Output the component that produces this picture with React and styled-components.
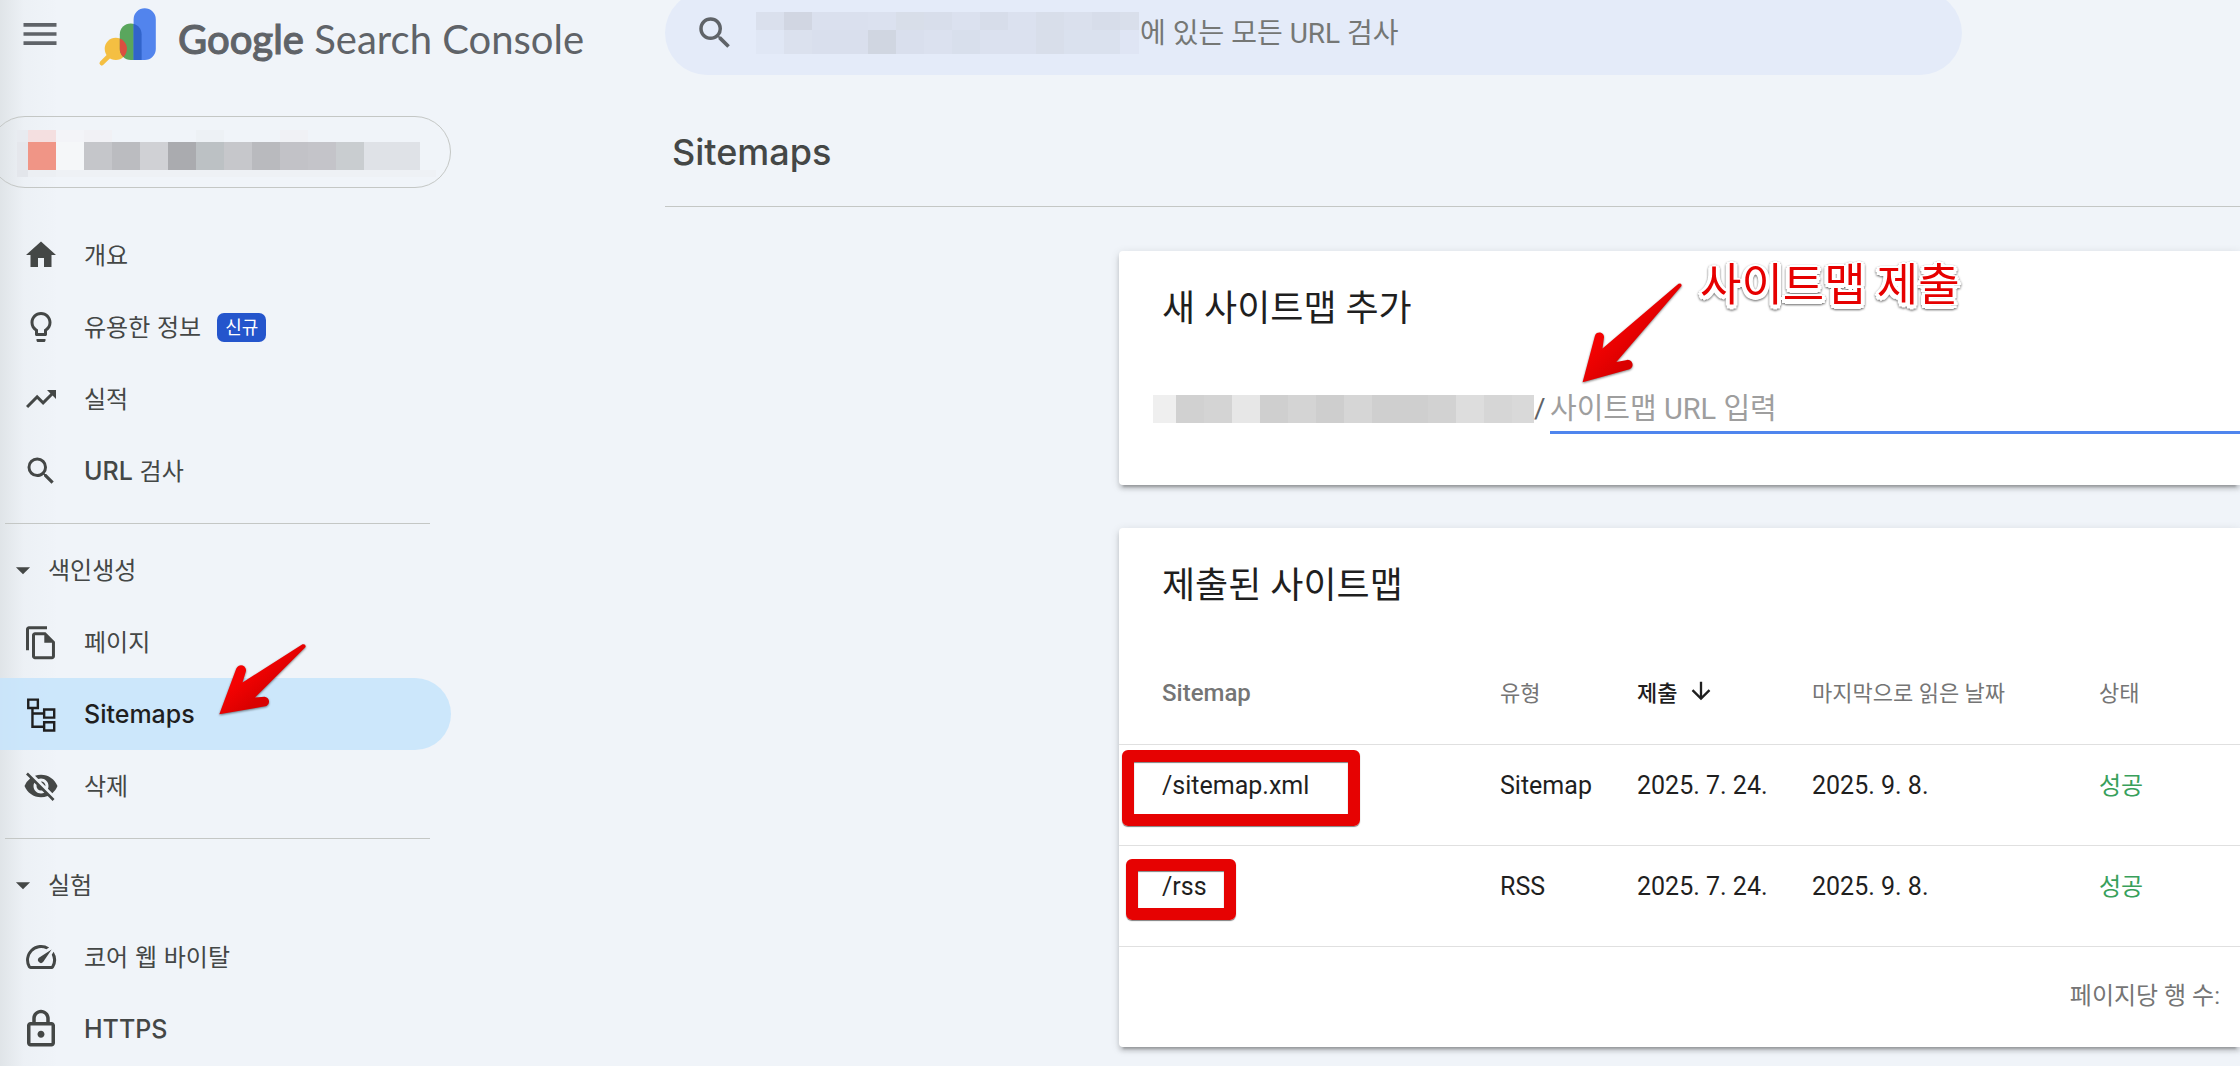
// Librairies.
import React from 'react';
import styled, { createGlobalStyle } from 'styled-components';
import {
    MdArrowDownward,
    MdArrowDropDown,
    MdHome,
    MdLightbulbOutline,
    MdMenu,
    MdOutlineLock,
    MdSearch,
    MdSpeed,
    MdTrendingUp,
    MdVisibilityOff,
} from 'react-icons/md';


// Global.
const GlobalStyle = createGlobalStyle`
    * {
        box-sizing: border-box;
    }

    body {
        margin     : 0;
        background : #f0f4f9;
        color      : #1f1f1f;
        font-family: Roboto, 'Noto Sans CJK KR', sans-serif;
        overflow   : hidden;
    }
`;


// Styled Components.
const StyledPage = styled.div`
    display              : grid;
    grid-template-columns: 665px minmax(0, 1fr);
    min-height           : 100vh;
    background           : linear-gradient(to right, rgba(60, 70, 60, .09), rgba(60, 70, 60, .02) 24px, transparent 60px);
`;

const StyledBrand = styled.div`
    display    : flex;
    align-items: center;
    height     : 74px;
    padding    : 0 0 6px 18px;
`;

const StyledMenuButton = styled.button`
    display   : flex;
    padding   : 0;
    border    : 0;
    background: none;
    color     : #5f6368;
    font-size : 44px;
`;

const StyledLogo = styled.svg`
    width : 60px;
    height: 60px;
    margin: 6px 20px 0 36px;
`;

const StyledBrandName = styled.span`
    padding-top: 10px;
    color      : #5f6368;
    font-family: Lato, 'Noto Sans CJK KR', sans-serif;
    font-size  : 40px;
    line-height: 52px;
    white-space: nowrap;

    b {
        font-weight        : 500;
        -webkit-text-stroke: 1px #5f6368;
    }
`;

const StyledProperty = styled.button`
    display      : flex;
    align-items  : center;
    width        : 462px;
    height       : 72px;
    margin       : 42px 0 31px -11px;
    padding      : 3px 0 0 27px;
    border       : 1px solid #c4c7c5;
    border-radius: 36px;
    background   : none;
`;

const StyledMosaic = styled.span`
    display       : flex;
    flex-direction: column;
    flex-shrink   : 0;
`;

const StyledMosaicLine = styled.span`
    display: flex;
    height : ${props => props.$height}px;
`;

const StyledTile = styled.span`
    width     : ${props => props.$width}px;
    background: ${props => props.$color};
`;

const StyledNav = styled.nav`
    display       : flex;
    flex-direction: column;
    width         : 451px;
    font-family   : Inter, 'Noto Sans CJK KR', sans-serif;
    font-size     : 24px;
`;

const StyledNavLink = styled.a`
    position       : relative;
    display        : flex;
    align-items    : center;
    height         : 72px;
    padding-left   : 20px;
    border-radius  : 0 36px 36px 0;
    background     : ${props => props.$active ? 'rgba(197, 228, 252, .85)' : 'none'};
    color          : ${props => props.$active ? '#1f1f1f' : '#444746'};
    text-decoration: none;
`;

const StyledNavIcon = styled.span`
    display        : flex;
    justify-content: center;
    width          : 42px;
    margin-right   : 22px;
    font-size      : ${props => props.$size || 36}px;
`;

const StyledNavLabel = styled.span`
    padding-bottom: 3px;
`;

const StyledLatin = styled.span`
    font-size  : 25px;
    font-weight: 500;
`;

const StyledBadge = styled.span`
    margin-left  : 16px;
    padding      : 0 8px;
    border-radius: 7px;
    background   : #2455cc;
    color        : white;
    font-size    : 18px;
    line-height  : 29px;
`;

const StyledSection = styled.button`
    display    : flex;
    align-items: center;
    gap        : 8px;
    height     : 72px;
    padding    : 0 0 0 6px;
    border     : 0;
    background : none;
    color      : #444746;
    font-family: inherit;
    font-size  : 24px;

    svg {
        font-size: 34px;
    }
`;

const StyledDivider = styled.hr`
    width     : 425px;
    height    : 1px;
    margin    : 16px 0 10px 5px;
    border    : 0;
    background: #c4c7c5;
`;

const StyledSearch = styled.label`
    display      : flex;
    align-items  : center;
    height       : 84px;
    margin       : -9px 278px 0 0;
    padding      : 0 40px 0 29px;
    border-radius: 42px;
    background   : #e4ebf9;
    color        : #5f6368;

    > svg {
        flex-shrink : 0;
        margin-right: 20px;
        font-size   : 42px;
    }
`;

const StyledSearchInput = styled.input`
    flex       : 1;
    min-width  : 0;
    padding    : 0 1px;
    border     : 0;
    outline    : 0;
    background : none;
    font-family: inherit;
    font-size  : 28px;

    &::placeholder {
        color: #757775;
    }
`;

const StyledTitle = styled.h1`
    margin       : 0;
    padding      : 47px 0 23px 7px;
    border-bottom: 1px solid #c4c7c5;
    color        : #444746;
    font-family  : Inter, sans-serif;
    font-size    : 36px;
    font-weight  : 500;
    line-height  : 61px;
`;

const StyledCards = styled.div`
    display       : flex;
    flex-direction: column;
    gap           : 43px;
    padding       : 44px 0 19px 454px;
`;

const StyledCard = styled.section`
    position     : relative;
    border-radius: 4px 0 0 4px;
    background   : white;
    box-shadow   : 0 6px 2px -4px rgba(0, 0, 0, .2),
                   0 4px 4px 0 rgba(0, 0, 0, .14),
                   0 2px 10px 0 rgba(0, 0, 0, .12);
`;

const StyledCardTitle = styled.h2`
    margin     : 0;
    padding    : 31px 43px 25px;
    font-size  : 36px;
    font-weight: 400;
    line-height: 54px;
`;

const StyledForm = styled.form`
    display    : flex;
    align-items: center;
    padding    : 22px 0 51px 34px;
    color      : #5f6368;
    font-size  : 28px;
`;

const StyledSlash = styled.span`
    width: 16px;
`;

const StyledUrlInput = styled.input`
    flex         : 1;
    min-width    : 0;
    height       : 51px;
    padding      : 3px 0 0;
    border       : 0;
    border-bottom: 3px solid #4f85ee;
    outline      : 0;
    background   : none;
    font-family  : inherit;
    font-size    : 29px;

    &::placeholder {
        color: #9e9e9e;
    }
`;

const StyledTable = styled.table`
    width          : 100%;
    border-collapse: separate;
    border-spacing : 0;
    table-layout   : fixed;
    text-align     : left;
`;

const StyledTh = styled.th`
    width         : ${props => props.$width ? props.$width + 'px' : 'auto'};
    height        : 107px;
    padding       : ${props => props.$first ? '3px 0 0 43px' : 0};
    border-bottom : 1px solid #e0e0e0;
    color         : #757575;
    font-size     : ${props => props.$first ? 24 : 22}px;
    font-weight   : ${props => props.$first ? 500 : 400};
    vertical-align: middle;
`;

const StyledSort = styled.button`
    display    : flex;
    align-items: center;
    gap        : 10px;
    padding    : 0;
    border     : 0;
    background : none;
    color      : #1f1f1f;
    font-family: inherit;
    font-size  : 22px;
    font-weight: 500;

    svg {
        font-size: 28px;
    }
`;

const StyledTd = styled.td`
    position      : relative;
    height        : 101px;
    padding       : 22px 0 0 ${props => props.$first ? 43 : 0}px;
    border-bottom : 1px solid #e0e0e0;
    color         : ${props => props.$success ? '#38a05b' : '#1f1f1f'};
    font-size     : ${props => props.$success ? 24 : 25}px;
    line-height   : 38px;
    vertical-align: top;
`;

const StyledPager = styled.div`
    padding    : 31px 20px 32px 0;
    color      : #757575;
    font-size  : 24px;
    line-height: 37px;
    text-align : right;
`;

// Annotations posées par-dessus la page.
const StyledFrame = styled.span`
    position     : absolute;
    top          : ${props => props.$top}px;
    left         : ${props => props.$left}px;
    width        : ${props => props.$width}px;
    height       : ${props => props.$height}px;
    border       : 12px solid #e60202;
    border-radius: 6px;
    box-shadow   : 0 1px 1px rgba(0, 0, 0, .5), inset 0 1px 1px rgba(0, 0, 0, .5);
`;

const StyledArrow = styled.svg`
    position: absolute;
    top     : ${props => props.$top}px;
    left    : ${props => props.$left}px;
    z-index : 1;
    filter  : drop-shadow(0 1px 1px rgba(0, 0, 0, .5));
`;

const StyledNote = styled.strong`
    position   : absolute;
    top        : 2px;
    left       : 581px;
    color      : #e60000;
    font-size  : 45px;
    font-weight: 400;
    line-height: 66px;
    white-space: nowrap;
    text-shadow: -4px 1px white, 4px 1px white, 0 -2px white, 0 5px white,
                 -3px 4px white, 3px 4px white, -3px -1px white, 3px -1px white;
    filter     : drop-shadow(0 1px 1px rgba(0, 0, 0, .6));
`;


// Tuiles des zones masquées : [largeur, couleur].
const propertyMosaic = [
    { height: 12, tiles: [[11, '#e8ebf0'], [28, '#f4dfe0'], [28, '#f3f4f8'], [28, '#f1f1f5'], [84, '#f0f4f9'], [28, '#edf1f5'], [56, '#f0f4f9'], [28, '#f0f1f5'], [128, '#f0f4f9']] },
    { height: 28, tiles: [[11, '#e5e7ec'], [28, '#f09586'], [28, '#f5f7f9'], [28, '#c5c6ca'], [28, '#bbbcc0'], [28, '#d0d1d5'], [28, '#aaabaf'], [28, '#bcc1c4'], [28, '#c6c7cb'], [28, '#b9babe'], [28, '#c2c2c7'], [28, '#c4c4c9'], [28, '#c9cdd0'], [56, '#dfe2e7']] },
    { height: 7, tiles: [[11, '#e3e6eb'], [28, '#eceff3'], [380, '#eef1f5']] },
];

const searchMosaic = [
    { height: 18, tiles: [[28, '#dae0ed'], [28, '#d1d6e2'], [56, '#dae0ee'], [28, '#dbe1ef'], [28, '#d8dee9'], [28, '#d8deeb'], [28, '#dbe1ef'], [28, '#d7ddea'], [28, '#dbe1ef'], [28, '#d8deea'], [28, '#dae0ed'], [28, '#d7ddea'], [19, '#d9dfeb']] },
    { height: 24, tiles: [[28, '#e0e7f5'], [28, '#dbe1ee'], [56, '#d9dfed'], [28, '#d0d6e1'], [28, '#d9dfed'], [28, '#dbe1ef'], [28, '#d8dfec'], [56, '#dbe1ef'], [28, '#d8deea'], [56, '#dae1ee'], [19, '#dfe5f4']] },
];

const urlMosaic = [
    { height: 28, tiles: [[23, '#efefef'], [28, '#d1d1d1'], [28, '#d4d4d4'], [28, '#e7e7e7'], [28, '#cfcfcf'], [28, '#d4d4d4'], [28, '#cecece'], [28, '#d6d6d6'], [56, '#cfcfcf'], [28, '#d2d2d2'], [28, '#dddddd'], [28, '#d6d6d6'], [22, '#d9d9d9']] },
];

const sitemaps = [
    { path: '/sitemap.xml', type: 'Sitemap', sent: '2025. 7. 24.', read: '2025. 9. 8.', status: '성공', frame: { $top: 5, $left: 3, $width: 238, $height: 76 } },
    { path: '/rss', type: 'RSS', sent: '2025. 7. 24.', read: '2025. 9. 8.', status: '성공', frame: { $top: 13, $left: 7, $width: 110, $height: 61 } },
];


function Mosaic({ lines }) {
    return (
        <StyledMosaic>
            {lines.map((line, i) => (
                <StyledMosaicLine key={i} $height={line.height}>
                    {line.tiles.map(([width, color], j) => <StyledTile key={j} $width={width} $color={color} />)}
                </StyledMosaicLine>
            ))}
        </StyledMosaic>
    );
}

function Logo() {
    return (
        <StyledLogo viewBox="0 0 60 60" aria-hidden="true">
            <defs>
                <clipPath id="logo-green">
                    <path d="M21.8 27.3a10.9 10.9 0 0 1 21.8 0V53H32.8a11 11 0 0 1-11-11z" />
                </clipPath>
            </defs>
            <path d="M12 48L3.8 56.2" stroke="#f4bf42" strokeWidth="4.6" strokeLinecap="round" />
            <circle cx="17.8" cy="41.8" r="11.1" fill="#f4bf42" />
            <path d="M21.8 27.3a10.9 10.9 0 0 1 21.8 0V53H32.8a11 11 0 0 1-11-11z" fill="#5aa65d" />
            <path d="M35.6 12.4a11.1 11.1 0 0 1 22.2 0V42a11 11 0 0 1-11 11H35.6z" fill="#5284ed" />
            <g clipPath="url(#logo-green)">
                <circle cx="17.8" cy="41.8" r="11.1" fill="#db4f40" />
                <path d="M35.6 1h22v52h-22z" fill="#3164cb" />
            </g>
        </StyledLogo>
    );
}

function PagesIcon() {
    return (
        <svg width="36" height="36" viewBox="0 0 24 24" fill="currentColor">
            <path d="M16 1.5H4c-1.1 0-2 .9-2 2v14h2v-14h12z" />
            <path fillRule="evenodd" d="M8 5.5h7l6.3 6.3v9.7c0 1.1-.9 2-2 2H8c-1.1 0-2-.9-2-2v-14c0-1.1.9-2 2-2zm0 2v14h11.3v-9H14.2v-5z" />
        </svg>
    );
}

function SitemapIcon() {
    return (
        <svg width="36" height="36" viewBox="0 0 24 24" fill="none" stroke="currentColor" strokeWidth="1.6">
            <path d="M3.5 2.4h6.4v5.6H3.5zM14.1 9h6.7v5.4h-6.7zM14.1 17.5h6.7V23h-6.7zM6.3 8v12.5h7.8M6.3 11.7h7.8" />
        </svg>
    );
}

function Arrow({ id, d, ...rest }) {
    return (
        <StyledArrow aria-hidden="true" {...rest}>
            <defs>
                <linearGradient id={id} x1="0.35" y1="0.4" x2="0.6" y2="0.65">
                    <stop offset="0" stopColor="#f40202" />
                    <stop offset="1" stopColor="#d90000" />
                </linearGradient>
            </defs>
            <path d={d} fill={`url(#${id})`} />
        </StyledArrow>
    );
}

function NavItem({ icon, size, active, children }) {
    return (
        <StyledNavLink href="#" $active={active} aria-current={active ? 'page' : undefined}>
            <StyledNavIcon $size={size}>{icon}</StyledNavIcon>
            {children}
        </StyledNavLink>
    );
}

function Sidebar() {
    return (
        <aside>
            <StyledBrand>
                <StyledMenuButton type="button" aria-label="메뉴"><MdMenu /></StyledMenuButton>
                <Logo />
                <StyledBrandName><b>Google</b> Search Console</StyledBrandName>
            </StyledBrand>
            <StyledProperty type="button" aria-label="속성">
                <Mosaic lines={propertyMosaic} />
            </StyledProperty>
            <StyledNav>
                <NavItem icon={<MdHome />}><StyledNavLabel>개요</StyledNavLabel></NavItem>
                <NavItem icon={<MdLightbulbOutline />}>
                    <StyledNavLabel>유용한 정보</StyledNavLabel>
                    <StyledBadge>신규</StyledBadge>
                </NavItem>
                <NavItem icon={<MdTrendingUp />}><StyledNavLabel>실적</StyledNavLabel></NavItem>
                <NavItem icon={<MdSearch />}>
                    <StyledNavLabel><StyledLatin>URL</StyledLatin> 검사</StyledNavLabel>
                </NavItem>
                <StyledDivider />
                <StyledSection type="button"><MdArrowDropDown /><StyledNavLabel>색인생성</StyledNavLabel></StyledSection>
                <NavItem icon={<PagesIcon />}><StyledNavLabel>페이지</StyledNavLabel></NavItem>
                <NavItem icon={<SitemapIcon />} active>
                    <StyledLatin>Sitemaps</StyledLatin>
                    <Arrow
                        id="arrow-nav"
                        $top={-36}
                        $left={216}
                        width="96"
                        height="78"
                        d="M3.3 72.3L20.3 26.5a5 5 0 0 1 9.4 3.5L26.5 40.5 86.5 2.3Q90 1.5 89.6 5L39 55.5 48.5 54.7a5 5 0 0 1 2 9.3z"
                    />
                </NavItem>
                <NavItem icon={<MdVisibilityOff />}><StyledNavLabel>삭제</StyledNavLabel></NavItem>
                <StyledDivider />
                <StyledSection type="button"><MdArrowDropDown /><StyledNavLabel>실험</StyledNavLabel></StyledSection>
                <NavItem icon={<MdSpeed />}><StyledNavLabel>코어 웹 바이탈</StyledNavLabel></NavItem>
                <NavItem icon={<MdOutlineLock />} size={42}><StyledLatin>HTTPS</StyledLatin></NavItem>
            </StyledNav>
        </aside>
    );
}

function AddSitemap() {
    return (
        <StyledCard>
            <StyledCardTitle>새 사이트맵 추가</StyledCardTitle>
            <StyledForm>
                <Mosaic lines={urlMosaic} />
                <StyledSlash>/</StyledSlash>
                <StyledUrlInput type="text" placeholder="사이트맵 URL 입력" aria-label="사이트맵 URL 입력" />
            </StyledForm>
            <Arrow
                id="arrow-form"
                $top={29}
                $left={461}
                width="110"
                height="110"
                d="M2.6 102.3L14.9 56a4.6 4.6 0 0 1 9 2L22.5 68.5 98.5 3.8Q102 2.5 101.5 6L36.3 82 46 80.2a4.7 4.7 0 0 1 3.5 9z"
            />
            <StyledNote>사이트맵 제출</StyledNote>
        </StyledCard>
    );
}

function SubmittedSitemaps() {
    return (
        <StyledCard>
            <StyledCardTitle>제출된 사이트맵</StyledCardTitle>
            <StyledTable>
                <thead>
                    <tr>
                        <StyledTh $width={381} $first>Sitemap</StyledTh>
                        <StyledTh $width={137}>유형</StyledTh>
                        <StyledTh $width={175}><StyledSort type="button">제출 <MdArrowDownward /></StyledSort></StyledTh>
                        <StyledTh $width={287}>마지막으로 읽은 날짜</StyledTh>
                        <StyledTh>상태</StyledTh>
                    </tr>
                </thead>
                <tbody>
                    {sitemaps.map(sitemap => (
                        <tr key={sitemap.path}>
                            <StyledTd $first>{sitemap.path}<StyledFrame {...sitemap.frame} /></StyledTd>
                            <StyledTd>{sitemap.type}</StyledTd>
                            <StyledTd>{sitemap.sent}</StyledTd>
                            <StyledTd>{sitemap.read}</StyledTd>
                            <StyledTd $success>{sitemap.status}</StyledTd>
                        </tr>
                    ))}
                </tbody>
            </StyledTable>
            <StyledPager>페이지당 행 수:</StyledPager>
        </StyledCard>
    );
}

function App() {
    // Render
    return (
        <StyledPage>
            <GlobalStyle />
            <Sidebar />
            <main>
                <StyledSearch>
                    <MdSearch />
                    <Mosaic lines={searchMosaic} />
                    <StyledSearchInput type="text" placeholder="에 있는 모든 URL 검사" aria-label="URL 검사" />
                </StyledSearch>
                <StyledTitle>Sitemaps</StyledTitle>
                <StyledCards>
                    <AddSitemap />
                    <SubmittedSitemaps />
                </StyledCards>
            </main>
        </StyledPage>
    );
};

export default App;
